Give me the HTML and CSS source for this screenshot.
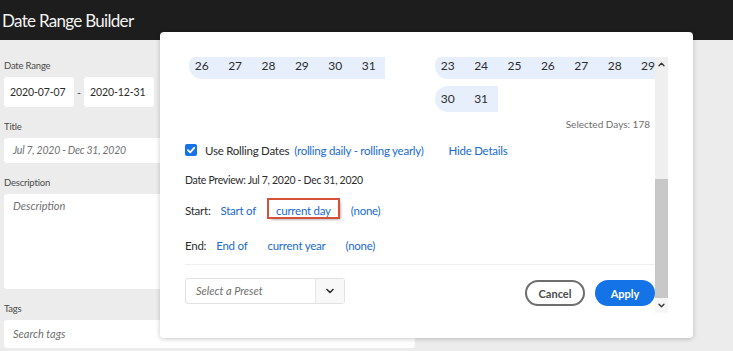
FILE: index.html
```html
<!DOCTYPE html>
<html lang="en">

<head>
    <meta charset="UTF-8">
    <meta name="viewport" content="width=device-width, initial-scale=1.0">
    <title>Date Range Builder</title>
    <link rel="stylesheet" href="styles.css">
</head>

<body>
    <header class="topbar">Date Range Builder</header>

    <main class="builder">
        <div class="field">
            <label>Date Range</label>
            <div class="range-inputs">
                <div class="input date-input">2020-07-07</div>
                <span class="dash">-</span>
                <div class="input date-input">2020-12-31</div>
            </div>
        </div>
        <div class="field">
            <label>Title</label>
            <div class="input title-input placeholder">Jul 7, 2020 - Dec 31, 2020</div>
        </div>
        <div class="field">
            <label>Description</label>
            <div class="input desc-input placeholder">Description</div>
        </div>
        <div class="field">
            <label>Tags</label>
            <div class="input tags-input placeholder">Search tags</div>
        </div>
    </main>

    <!-- calendar popover -->
    <div class="popover">
        <div class="popover-body">
            <div class="scroll-content">
                <div class="months">
                    <div class="month">
                        <div class="week">
                            <div class="range">
                                <span class="day">26</span>
                                <span class="day">27</span>
                                <span class="day">28</span>
                                <span class="day">29</span>
                                <span class="day">30</span>
                                <span class="day">31</span>
                            </div>
                        </div>
                    </div>
                    <div class="month">
                        <div class="week">
                            <div class="range">
                                <span class="day">23</span>
                                <span class="day">24</span>
                                <span class="day">25</span>
                                <span class="day">26</span>
                                <span class="day">27</span>
                                <span class="day">28</span>
                                <span class="day">29</span>
                            </div>
                        </div>
                        <div class="week">
                            <div class="range">
                                <span class="day">30</span>
                                <span class="day">31</span>
                            </div>
                        </div>
                    </div>
                </div>

                <div class="selected-days">Selected Days: 178</div>

                <div class="row rolling-row">
                    <span class="checkbox">
                        <svg width="12" height="12" viewBox="0 0 12 12">
                            <polyline points="3,6.2 5.2,8.4 9.2,3.8" fill="none" stroke="#fff" stroke-width="1.8" stroke-linecap="round" stroke-linejoin="round" />
                        </svg>
                    </span>
                    <span class="rolling-label">Use Rolling Dates</span>
                    <a class="link">(rolling daily - rolling yearly)</a>
                    <a class="link hide-details">Hide Details</a>
                </div>

                <div class="row preview-row">Date Preview: Jul 7, 2020 - Dec 31, 2020</div>

                <div class="row rule-row start-row">
                    <span class="rule-label">Start:</span>
                    <a class="link">Start of</a>
                    <a class="link highlighted">current day</a>
                    <a class="link">(none)</a>
                </div>

                <div class="row rule-row end-row">
                    <span class="rule-label">End:</span>
                    <a class="link">End of</a>
                    <a class="link">current year</a>
                    <a class="link">(none)</a>
                </div>

                <div class="divider"></div>

                <div class="footer">
                    <div class="preset">
                        <span class="preset-text">Select a Preset</span>
                        <span class="preset-btn">
                            <svg width="10" height="10" viewBox="0 0 10 10">
                                <polyline points="2,3.5 5,6.5 8,3.5" fill="none" stroke="#2c2c2c" stroke-width="1.6" stroke-linecap="round" stroke-linejoin="round" />
                            </svg>
                        </span>
                    </div>
                    <div class="actions">
                        <button class="btn btn-cancel">Cancel</button>
                        <button class="btn btn-apply">Apply</button>
                    </div>
                </div>
            </div>

            <div class="scrollbar">
                <span class="sb-btn">
                    <svg width="9" height="9" viewBox="0 0 9 9">
                        <polyline points="2,5.8 4.5,3.2 7,5.8" fill="none" stroke="#333" stroke-width="1.3" stroke-linecap="round" stroke-linejoin="round" />
                    </svg>
                </span>
                <span class="sb-track"><span class="sb-thumb"></span></span>
                <span class="sb-btn sb-btn-down">
                    <svg width="9" height="9" viewBox="0 0 9 9">
                        <polyline points="2,3.2 4.5,5.8 7,3.2" fill="none" stroke="#333" stroke-width="1.3" stroke-linecap="round" stroke-linejoin="round" />
                    </svg>
                </span>
            </div>
        </div>
    </div>
</body>

</html>
```

FILE: styles.css
```css
body {
    font-family: 'Lato', 'Open Sans', sans-serif;
    background-color: #ececec;
    margin: 0;
    height: 351px;
    overflow: hidden;
    position: relative;
    color: #2c2c2c;
}

.topbar {
    height: 40px;
    background-color: #1d1d1d;
    color: #f2f2f2;
    font-size: 17px;
    letter-spacing: -0.7px;
    display: flex;
    align-items: center;
    padding-left: 2px;
}

.builder {
    width: 411px;
    padding: 19px 4px 0;
}

.field label {
    display: block;
    font-size: 9.5px;
    letter-spacing: -0.2px;
    line-height: 14px;
    color: #4b4b4b;
    margin-bottom: 4px;
}

.field + .field {
    margin-top: 13px;
}

.input {
    background-color: #fff;
    border-radius: 3px;
    font-size: 11px;
    color: #2c2c2c;
    padding: 0 9px;
    box-sizing: border-box;
    white-space: nowrap;
}

.placeholder {
    font-style: italic;
    color: #707070;
}

.range-inputs {
    display: flex;
    align-items: center;
}

.date-input {
    flex-shrink: 0;
    width: 70px;
    height: 30px;
    line-height: 30px;
    padding: 0 6px;
    font-size: 10.5px;
    letter-spacing: -0.1px;
}

.dash {
    width: 10px;
    text-align: center;
    font-size: 11px;
    color: #4b4b4b;
}

.title-input {
    height: 25px;
    line-height: 25px;
    font-size: 10.5px;
    letter-spacing: -0.25px;
}

.desc-input {
    height: 95px;
    padding-top: 4px;
    line-height: 16px;
}

.tags-input {
    height: 28px;
    line-height: 28px;
}

/* popover */

.popover {
    position: absolute;
    top: 32px;
    left: 160px;
    width: 533px;
    height: 306px;
    background-color: #fff;
    border-radius: 4px;
    box-shadow: 0 1px 5px rgba(0, 0, 0, 0.22);
}

.popover-body {
    display: flex;
    margin-top: 25px;
    height: 256px;
}

.scroll-content {
    flex: 1;
    overflow: hidden;
    padding-left: 25px;
    font-size: 11.5px;
    letter-spacing: -0.25px;
}

.months {
    display: flex;
    gap: 12px;
    margin-top: -4px;
    letter-spacing: 0;
}

.month {
    flex-shrink: 0;
    width: 234px;
    display: flex;
    flex-direction: column;
    gap: 7px;
}

.week {
    display: flex;
    height: 26px;
}

.range {
    display: flex;
    margin-left: 4px;
    background-color: #e6effb;
    border-radius: 13px 0 0 13px;
}

.day {
    width: 33.4px;
    height: 26px;
    line-height: 26px;
    text-align: center;
    font-size: 12px;
    color: #2c2c2c;
}

.day:first-child {
    margin-left: -4px;
}

.selected-days {
    text-align: right;
    padding-right: 5px;
    margin-top: 4px;
    font-size: 10px;
    letter-spacing: 0;
    line-height: 16px;
    color: #6e6e6e;
}

.row {
    display: flex;
    align-items: center;
    white-space: nowrap;
}

.link {
    color: #1a6bd1;
}

.rolling-row {
    height: 20px;
    margin-top: 8px;
}

.checkbox {
    width: 12px;
    height: 12px;
    border-radius: 2px;
    background-color: #1473e6;
    display: flex;
    margin-right: 8px;
}

.rolling-label {
    margin-right: 5px;
}

.hide-details {
    margin-left: 25px;
}

.preview-row {
    height: 20px;
    margin-top: 10px;
    font-size: 10.5px;
    letter-spacing: -0.3px;
}

.rule-row {
    height: 22px;
    gap: 20px;
}

.rule-label {
    margin-right: -10px;
}

.start-row {
    margin-top: 9px;
}

.end-row {
    margin-top: 13px;
}

.highlighted {
    outline: 2px solid #d6503b;
    padding: 4px 7px 0;
    margin: 0 -7px 3px;
    line-height: 13px;
    box-shadow: 2px 2px 3px rgba(0, 0, 0, 0.5);
}

.divider {
    height: 1px;
    background-color: #f0f0f0;
    margin-top: 8px;
}

.footer {
    display: flex;
    margin-top: 13px;
}

.preset {
    display: flex;
    width: 160px;
    height: 26px;
    box-sizing: border-box;
    border: 1px solid #e1e1e1;
    border-radius: 3px;
}

.preset-text {
    flex: 1;
    padding-left: 10px;
    line-height: 24px;
    font-size: 11px;
    letter-spacing: 0;
    font-style: italic;
    color: #6e6e6e;
}

.preset-btn {
    width: 28px;
    display: flex;
    align-items: center;
    justify-content: center;
    background-color: #f8f8f8;
    border-left: 1px solid #e6e6e6;
}

.actions {
    display: flex;
    gap: 10px;
    margin-left: auto;
    margin-top: 2px;
}

.btn {
    width: 60px;
    height: 26px;
    border-radius: 13px;
    font-family: inherit;
    font-size: 11px;
    font-weight: bold;
    cursor: pointer;
    padding: 0;
}

.btn-cancel {
    background-color: #fff;
    border: 2px solid #6e6e6e;
    color: #4b4b4b;
}

.btn-apply {
    background-color: #1473e6;
    border: none;
    color: #fff;
}

.scrollbar {
    width: 13px;
    margin-right: 25px;
    display: flex;
    flex-direction: column;
    background-color: #efefef;
}

.sb-btn {
    height: 15px;
    display: flex;
    align-items: center;
    justify-content: center;
}

.sb-btn-down {
    background-color: #f6f6f6;
}

.sb-track {
    flex: 1;
    display: flex;
    flex-direction: column;
    padding-top: 107px;
}

.sb-thumb {
    flex: 1;
    background-color: #c8c8c8;
}
```
